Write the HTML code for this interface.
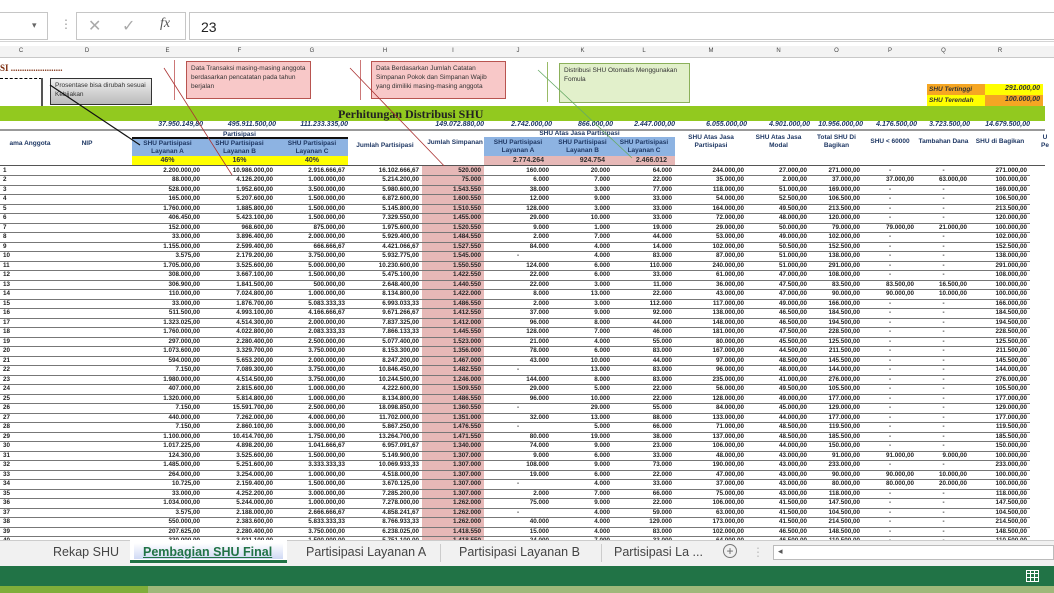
<!DOCTYPE html>
<html><head><meta charset="utf-8"><style>
*{margin:0;padding:0;box-sizing:border-box}
body{width:1054px;height:593px;overflow:hidden;background:#fff;font-family:"Liberation Sans",sans-serif;position:relative}
.abs{position:absolute}
.fbar{left:0;top:0;width:1054px;height:42px;background:#fff;border-bottom:1px solid #d4d4d4}
.box{border:1px solid #c6c6c6;background:#fff}
.colh{left:0;top:46px;width:1054px;height:12px;background:#f3f3f3;border-bottom:1px solid #c8c8c8;font-size:6px;color:#444}
.colh span{position:absolute;top:2px;text-align:center}
.note{font-size:6.5px;line-height:9px;color:#333;padding:2px 4px;border:1px solid #b85450}
table{border-collapse:collapse;table-layout:fixed;position:absolute;left:0;top:166px;font-size:6.3px;font-weight:bold;color:#222}
td{height:9.5px;padding:0 3px;text-align:right;border-bottom:1px solid #777;white-space:nowrap;overflow:hidden;line-height:8px}
td.l{text-align:left}
td.p{background:#e6b8b7}
td.c{text-align:center}
.hd{font-size:6.5px;font-weight:bold;color:#1f3864;text-align:center;position:absolute;line-height:8px}
.tot{position:absolute;top:121px;font-size:7px;font-style:italic;font-weight:bold;color:#1f3864;text-align:right}
.tab{position:absolute;top:545px;font-size:12.5px;color:#444}
</style></head><body>
<div class="abs fbar"></div>
<div class="abs box" style="left:-2px;top:12px;width:50px;height:28px"></div>
<div class="abs" style="left:32px;top:20px;font-size:9px;color:#666">▾</div>
<div class="abs" style="left:60px;top:17px;font-size:12px;color:#999">⋮</div>
<div class="abs box" style="left:76px;top:12px;width:110px;height:28px"></div>
<div class="abs" style="left:88px;top:16px;font-size:16px;color:#aaa">✕</div>
<div class="abs" style="left:122px;top:16px;font-size:16px;color:#aaa">✓</div>
<div class="abs" style="left:160px;top:16px;font-size:14px;color:#555;font-style:italic;font-family:'Liberation Serif',serif">fx</div>
<div class="abs box" style="left:189px;top:12px;width:870px;height:28px"></div>
<div class="abs" style="left:201px;top:19px;font-size:14px;color:#222">23</div>

<div class="abs colh">
<span style="left:0;width:42px">C</span><span style="left:42px;width:90px">D</span><span style="left:132px;width:71px">E</span><span style="left:203px;width:73px">F</span><span style="left:276px;width:72px">G</span><span style="left:348px;width:74px">H</span><span style="left:422px;width:62px">I</span><span style="left:484px;width:68px">J</span><span style="left:552px;width:61px">K</span><span style="left:613px;width:62px">L</span><span style="left:675px;width:72px">M</span><span style="left:747px;width:63px">N</span><span style="left:810px;width:53px">O</span><span style="left:863px;width:54px">P</span><span style="left:917px;width:53px">Q</span><span style="left:970px;width:60px">R</span>
</div>

<div class="abs" style="left:0;top:63px;font-size:9px;font-weight:bold;color:#7b2c0e;font-family:'Liberation Serif',serif">SI <span style="color:#7b2c0e;letter-spacing:0">.......................</span></div>
<div class="abs" style="left:0;top:78px;width:42px;border-top:1px dashed #000"></div>
<div class="abs" style="left:41px;top:78px;width:2px;height:28px;background:#555"></div>
<div class="abs note" style="left:50px;top:78px;width:102px;height:27px;background:linear-gradient(#eee,#bbb);border-color:#333">Prosentase bisa dirubah sesuai Kebijakan</div>
<div class="abs note" style="left:186px;top:61px;width:125px;height:38px;background:#f8c8c8">Data Transaksi masing-masing anggota berdasarkan pencatatan pada tahun berjalan</div>
<div class="abs note" style="left:371px;top:61px;width:135px;height:38px;background:#f8c8c8">Data Berdasarkan Jumlah Catatan Simpanan Pokok dan Simpanan Wajib yang dimiliki masing-masing anggota</div>
<div class="abs note" style="left:559px;top:63px;width:131px;height:40px;background:#e2f0cb;border-color:#8bb05a">Distribusi SHU Otomatis Menggunakan Fomula</div>
<div class="abs" style="left:174px;top:60px;width:1px;height:40px;background:#c77"></div>
<div class="abs" style="left:360px;top:60px;width:1px;height:40px;background:#c77"></div>
<div class="abs" style="left:547px;top:62px;width:1px;height:40px;background:#9b6"></div>

<div class="abs" style="left:927px;top:84px;width:58px;height:11px;background:#f5a623;font-size:6.5px;font-style:italic;font-weight:bold;color:#333;padding:2px">SHU Tertinggi</div>
<div class="abs" style="left:985px;top:84px;width:58px;height:11px;background:#ffff00;font-size:7px;font-style:italic;font-weight:bold;color:#333;text-align:right;padding:1px 3px">291.000,00</div>
<div class="abs" style="left:927px;top:95px;width:58px;height:11px;background:#ffff00;font-size:6.5px;font-style:italic;font-weight:bold;color:#333;padding:2px">SHU Terendah</div>
<div class="abs" style="left:985px;top:95px;width:58px;height:11px;background:#f5a623;font-size:7px;font-style:italic;font-weight:bold;color:#333;text-align:right;padding:1px 3px">100.000,00</div>

<div class="abs" style="left:0;top:106px;width:1045px;height:15px;background:#92c91f"></div>
<div class="abs" style="left:338px;top:107px;font-size:12px;font-weight:bold;color:#222;font-family:'Liberation Serif',serif">Perhitungan Distribusi SHU</div>

<div class="tot" style="left:132px;width:71px">37.950.149,80</div>
<div class="tot" style="left:203px;width:73px">495.911.500,00</div>
<div class="tot" style="left:276px;width:72px">111.233.335,00</div>
<div class="tot" style="left:422px;width:62px">149.072.880,00</div>
<div class="tot" style="left:484px;width:68px">2.742.000,00</div>
<div class="tot" style="left:552px;width:61px">866.000,00</div>
<div class="tot" style="left:613px;width:62px">2.447.000,00</div>
<div class="tot" style="left:675px;width:72px">6.055.000,00</div>
<div class="tot" style="left:747px;width:63px">4.901.000,00</div>
<div class="tot" style="left:810px;width:53px">10.956.000,00</div>
<div class="tot" style="left:863px;width:54px">4.176.500,00</div>
<div class="tot" style="left:917px;width:53px">3.723.500,00</div>
<div class="tot" style="left:970px;width:60px">14.679.500,00</div>
<div class="abs" style="left:0;top:129px;width:1045px;height:2px;background:#999"></div>

<div class="hd" style="left:203px;top:131px;width:73px">Partisipasi</div>
<div class="abs" style="left:132px;top:137px;width:216px;height:2px;background:#111"></div>
<div class="abs" style="left:132px;top:139px;width:216px;height:17px;background:#8db3e2"></div>
<div class="hd" style="left:132px;top:140px;width:71px">SHU Partisipasi<br>Layanan A</div>
<div class="hd" style="left:203px;top:140px;width:73px">SHU Partisipasi<br>Layanan B</div>
<div class="hd" style="left:276px;top:140px;width:72px">SHU Partisipasi<br>Layanan C</div>
<div class="abs" style="left:132px;top:156px;width:216px;height:9px;background:#ffff00"></div>
<div class="hd" style="left:132px;top:157px;width:71px;color:#333;font-size:7px">46%</div>
<div class="hd" style="left:203px;top:157px;width:73px;color:#333;font-size:7px">16%</div>
<div class="hd" style="left:276px;top:157px;width:72px;color:#333;font-size:7px">40%</div>
<div class="hd" style="left:0;top:140px;width:60px">ama Anggota</div>
<div class="hd" style="left:42px;top:140px;width:90px">NIP</div>
<div class="hd" style="left:348px;top:142px;width:74px">Jumlah Partisipasi</div>
<div class="hd" style="left:422px;top:139px;width:66px">Jumlah Simpanan</div>
<div class="hd" style="left:484px;top:130px;width:191px">SHU Atas Jasa Partisipasi</div>
<div class="abs" style="left:484px;top:137px;width:191px;height:19px;background:#8db3e2"></div>
<div class="hd" style="left:484px;top:139px;width:68px">SHU Partisipasi<br>Layanan A</div>
<div class="hd" style="left:552px;top:139px;width:61px">SHU Partisipasi<br>Layanan B</div>
<div class="hd" style="left:613px;top:139px;width:62px">SHU Partisipasi<br>Layanan C</div>
<div class="abs" style="left:484px;top:156px;width:191px;height:9px;background:#e6b8b7"></div>
<div class="abs" style="left:484px;top:157px;width:60px;font-size:7px;font-weight:bold;color:#333;text-align:right">2.774.264</div>
<div class="abs" style="left:552px;top:157px;width:53px;font-size:7px;font-weight:bold;color:#333;text-align:right">924.754</div>
<div class="abs" style="left:613px;top:157px;width:54px;font-size:7px;font-weight:bold;color:#333;text-align:right">2.466.012</div>
<div class="hd" style="left:675px;top:134px;width:72px">SHU Atas Jasa<br>Partisipasi</div>
<div class="hd" style="left:747px;top:134px;width:63px">SHU Atas Jasa<br>Modal</div>
<div class="hd" style="left:810px;top:134px;width:53px">Total SHU Di<br>Bagikan</div>
<div class="hd" style="left:863px;top:138px;width:54px">SHU &lt; 60000</div>
<div class="hd" style="left:917px;top:138px;width:53px">Tambahan Dana</div>
<div class="hd" style="left:970px;top:138px;width:60px">SHU di Bagikan</div>
<div class="hd" style="left:1030px;top:134px;width:30px">U<br>Pe</div>
<div class="abs" style="left:0;top:165px;width:1045px;height:1px;background:#555"></div>

<svg class="abs" style="left:0;top:0" width="1054" height="593">
<line x1="50" y1="85" x2="140" y2="145" stroke="#111" stroke-width="1.2"/>
<line x1="164" y1="68" x2="232" y2="175" stroke="#a33" stroke-width="0.8"/>
<line x1="350" y1="68" x2="450" y2="172" stroke="#a33" stroke-width="0.8"/>
<line x1="538" y1="70" x2="632" y2="158" stroke="#6a6" stroke-width="0.8"/>
</svg>

<table>
<colgroup><col style="width:42px"><col style="width:90px"><col style="width:71px"><col style="width:73px"><col style="width:72px"><col style="width:74px"><col style="width:62px"><col style="width:68px"><col style="width:61px"><col style="width:62px"><col style="width:72px"><col style="width:63px"><col style="width:53px"><col style="width:54px"><col style="width:53px"><col style="width:60px"></colgroup>
<tr><td class="l">1</td><td></td><td>2.200.000,00</td><td>10.986.000,00</td><td>2.916.666,67</td><td>16.102.666,67</td><td class="p">520.000</td><td>160.000</td><td>20.000</td><td>64.000</td><td>244.000,00</td><td>27.000,00</td><td>271.000,00</td><td class="c">-</td><td class="c">-</td><td>271.000,00</td></tr>
<tr><td class="l">2</td><td></td><td>88.000,00</td><td>4.126.200,00</td><td>1.000.000,00</td><td>5.214.200,00</td><td class="p">75.000</td><td>6.000</td><td>7.000</td><td>22.000</td><td>35.000,00</td><td>2.000,00</td><td>37.000,00</td><td>37.000,00</td><td>63.000,00</td><td>100.000,00</td></tr>
<tr><td class="l">3</td><td></td><td>528.000,00</td><td>1.952.600,00</td><td>3.500.000,00</td><td>5.980.600,00</td><td class="p">1.543.550</td><td>38.000</td><td>3.000</td><td>77.000</td><td>118.000,00</td><td>51.000,00</td><td>169.000,00</td><td class="c">-</td><td class="c">-</td><td>169.000,00</td></tr>
<tr><td class="l">4</td><td></td><td>165.000,00</td><td>5.207.600,00</td><td>1.500.000,00</td><td>6.872.600,00</td><td class="p">1.600.550</td><td>12.000</td><td>9.000</td><td>33.000</td><td>54.000,00</td><td>52.500,00</td><td>106.500,00</td><td class="c">-</td><td class="c">-</td><td>106.500,00</td></tr>
<tr><td class="l">5</td><td></td><td>1.760.000,00</td><td>1.885.800,00</td><td>1.500.000,00</td><td>5.145.800,00</td><td class="p">1.510.550</td><td>128.000</td><td>3.000</td><td>33.000</td><td>164.000,00</td><td>49.500,00</td><td>213.500,00</td><td class="c">-</td><td class="c">-</td><td>213.500,00</td></tr>
<tr><td class="l">6</td><td></td><td>406.450,00</td><td>5.423.100,00</td><td>1.500.000,00</td><td>7.329.550,00</td><td class="p">1.455.000</td><td>29.000</td><td>10.000</td><td>33.000</td><td>72.000,00</td><td>48.000,00</td><td>120.000,00</td><td class="c">-</td><td class="c">-</td><td>120.000,00</td></tr>
<tr><td class="l">7</td><td></td><td>152.000,00</td><td>968.600,00</td><td>875.000,00</td><td>1.975.600,00</td><td class="p">1.520.550</td><td>9.000</td><td>1.000</td><td>19.000</td><td>29.000,00</td><td>50.000,00</td><td>79.000,00</td><td>79.000,00</td><td>21.000,00</td><td>100.000,00</td></tr>
<tr><td class="l">8</td><td></td><td>33.000,00</td><td>3.896.400,00</td><td>2.000.000,00</td><td>5.929.400,00</td><td class="p">1.484.550</td><td>2.000</td><td>7.000</td><td>44.000</td><td>53.000,00</td><td>49.000,00</td><td>102.000,00</td><td class="c">-</td><td class="c">-</td><td>102.000,00</td></tr>
<tr><td class="l">9</td><td></td><td>1.155.000,00</td><td>2.599.400,00</td><td>666.666,67</td><td>4.421.066,67</td><td class="p">1.527.550</td><td>84.000</td><td>4.000</td><td>14.000</td><td>102.000,00</td><td>50.500,00</td><td>152.500,00</td><td class="c">-</td><td class="c">-</td><td>152.500,00</td></tr>
<tr><td class="l">10</td><td></td><td>3.575,00</td><td>2.179.200,00</td><td>3.750.000,00</td><td>5.932.775,00</td><td class="p">1.545.000</td><td class="c">-</td><td>4.000</td><td>83.000</td><td>87.000,00</td><td>51.000,00</td><td>138.000,00</td><td class="c">-</td><td class="c">-</td><td>138.000,00</td></tr>
<tr><td class="l">11</td><td></td><td>1.705.000,00</td><td>3.525.600,00</td><td>5.000.000,00</td><td>10.230.600,00</td><td class="p">1.550.550</td><td>124.000</td><td>6.000</td><td>110.000</td><td>240.000,00</td><td>51.000,00</td><td>291.000,00</td><td class="c">-</td><td class="c">-</td><td>291.000,00</td></tr>
<tr><td class="l">12</td><td></td><td>308.000,00</td><td>3.667.100,00</td><td>1.500.000,00</td><td>5.475.100,00</td><td class="p">1.422.550</td><td>22.000</td><td>6.000</td><td>33.000</td><td>61.000,00</td><td>47.000,00</td><td>108.000,00</td><td class="c">-</td><td class="c">-</td><td>108.000,00</td></tr>
<tr><td class="l">13</td><td></td><td>306.900,00</td><td>1.841.500,00</td><td>500.000,00</td><td>2.648.400,00</td><td class="p">1.440.550</td><td>22.000</td><td>3.000</td><td>11.000</td><td>36.000,00</td><td>47.500,00</td><td>83.500,00</td><td>83.500,00</td><td>16.500,00</td><td>100.000,00</td></tr>
<tr><td class="l">14</td><td></td><td>110.000,00</td><td>7.024.800,00</td><td>1.000.000,00</td><td>8.134.800,00</td><td class="p">1.422.000</td><td>8.000</td><td>13.000</td><td>22.000</td><td>43.000,00</td><td>47.000,00</td><td>90.000,00</td><td>90.000,00</td><td>10.000,00</td><td>100.000,00</td></tr>
<tr><td class="l">15</td><td></td><td>33.000,00</td><td>1.876.700,00</td><td>5.083.333,33</td><td>6.993.033,33</td><td class="p">1.486.550</td><td>2.000</td><td>3.000</td><td>112.000</td><td>117.000,00</td><td>49.000,00</td><td>166.000,00</td><td class="c">-</td><td class="c">-</td><td>166.000,00</td></tr>
<tr><td class="l">16</td><td></td><td>511.500,00</td><td>4.993.100,00</td><td>4.166.666,67</td><td>9.671.266,67</td><td class="p">1.412.550</td><td>37.000</td><td>9.000</td><td>92.000</td><td>138.000,00</td><td>46.500,00</td><td>184.500,00</td><td class="c">-</td><td class="c">-</td><td>184.500,00</td></tr>
<tr><td class="l">17</td><td></td><td>1.323.025,00</td><td>4.514.300,00</td><td>2.000.000,00</td><td>7.837.325,00</td><td class="p">1.412.000</td><td>96.000</td><td>8.000</td><td>44.000</td><td>148.000,00</td><td>46.500,00</td><td>194.500,00</td><td class="c">-</td><td class="c">-</td><td>194.500,00</td></tr>
<tr><td class="l">18</td><td></td><td>1.760.000,00</td><td>4.022.800,00</td><td>2.083.333,33</td><td>7.866.133,33</td><td class="p">1.445.550</td><td>128.000</td><td>7.000</td><td>46.000</td><td>181.000,00</td><td>47.500,00</td><td>228.500,00</td><td class="c">-</td><td class="c">-</td><td>228.500,00</td></tr>
<tr><td class="l">19</td><td></td><td>297.000,00</td><td>2.280.400,00</td><td>2.500.000,00</td><td>5.077.400,00</td><td class="p">1.523.000</td><td>21.000</td><td>4.000</td><td>55.000</td><td>80.000,00</td><td>45.500,00</td><td>125.500,00</td><td class="c">-</td><td class="c">-</td><td>125.500,00</td></tr>
<tr><td class="l">20</td><td></td><td>1.073.600,00</td><td>3.329.700,00</td><td>3.750.000,00</td><td>8.153.300,00</td><td class="p">1.356.000</td><td>78.000</td><td>6.000</td><td>83.000</td><td>167.000,00</td><td>44.500,00</td><td>211.500,00</td><td class="c">-</td><td class="c">-</td><td>211.500,00</td></tr>
<tr><td class="l">21</td><td></td><td>594.000,00</td><td>5.653.200,00</td><td>2.000.000,00</td><td>8.247.200,00</td><td class="p">1.467.000</td><td>43.000</td><td>10.000</td><td>44.000</td><td>97.000,00</td><td>48.500,00</td><td>145.500,00</td><td class="c">-</td><td class="c">-</td><td>145.500,00</td></tr>
<tr><td class="l">22</td><td></td><td>7.150,00</td><td>7.089.300,00</td><td>3.750.000,00</td><td>10.846.450,00</td><td class="p">1.482.550</td><td class="c">-</td><td>13.000</td><td>83.000</td><td>96.000,00</td><td>48.000,00</td><td>144.000,00</td><td class="c">-</td><td class="c">-</td><td>144.000,00</td></tr>
<tr><td class="l">23</td><td></td><td>1.980.000,00</td><td>4.514.500,00</td><td>3.750.000,00</td><td>10.244.500,00</td><td class="p">1.246.000</td><td>144.000</td><td>8.000</td><td>83.000</td><td>235.000,00</td><td>41.000,00</td><td>276.000,00</td><td class="c">-</td><td class="c">-</td><td>276.000,00</td></tr>
<tr><td class="l">24</td><td></td><td>407.000,00</td><td>2.815.600,00</td><td>1.000.000,00</td><td>4.222.600,00</td><td class="p">1.509.550</td><td>29.000</td><td>5.000</td><td>22.000</td><td>56.000,00</td><td>49.500,00</td><td>105.500,00</td><td class="c">-</td><td class="c">-</td><td>105.500,00</td></tr>
<tr><td class="l">25</td><td></td><td>1.320.000,00</td><td>5.814.800,00</td><td>1.000.000,00</td><td>8.134.800,00</td><td class="p">1.486.550</td><td>96.000</td><td>10.000</td><td>22.000</td><td>128.000,00</td><td>49.000,00</td><td>177.000,00</td><td class="c">-</td><td class="c">-</td><td>177.000,00</td></tr>
<tr><td class="l">26</td><td></td><td>7.150,00</td><td>15.591.700,00</td><td>2.500.000,00</td><td>18.098.850,00</td><td class="p">1.360.550</td><td class="c">-</td><td>29.000</td><td>55.000</td><td>84.000,00</td><td>45.000,00</td><td>129.000,00</td><td class="c">-</td><td class="c">-</td><td>129.000,00</td></tr>
<tr><td class="l">27</td><td></td><td>440.000,00</td><td>7.262.000,00</td><td>4.000.000,00</td><td>11.702.000,00</td><td class="p">1.351.000</td><td>32.000</td><td>13.000</td><td>88.000</td><td>133.000,00</td><td>44.000,00</td><td>177.000,00</td><td class="c">-</td><td class="c">-</td><td>177.000,00</td></tr>
<tr><td class="l">28</td><td></td><td>7.150,00</td><td>2.860.100,00</td><td>3.000.000,00</td><td>5.867.250,00</td><td class="p">1.476.550</td><td class="c">-</td><td>5.000</td><td>66.000</td><td>71.000,00</td><td>48.500,00</td><td>119.500,00</td><td class="c">-</td><td class="c">-</td><td>119.500,00</td></tr>
<tr><td class="l">29</td><td></td><td>1.100.000,00</td><td>10.414.700,00</td><td>1.750.000,00</td><td>13.264.700,00</td><td class="p">1.471.550</td><td>80.000</td><td>19.000</td><td>38.000</td><td>137.000,00</td><td>48.500,00</td><td>185.500,00</td><td class="c">-</td><td class="c">-</td><td>185.500,00</td></tr>
<tr><td class="l">30</td><td></td><td>1.017.225,00</td><td>4.898.200,00</td><td>1.041.666,67</td><td>6.957.091,67</td><td class="p">1.340.000</td><td>74.000</td><td>9.000</td><td>23.000</td><td>106.000,00</td><td>44.000,00</td><td>150.000,00</td><td class="c">-</td><td class="c">-</td><td>150.000,00</td></tr>
<tr><td class="l">31</td><td></td><td>124.300,00</td><td>3.525.600,00</td><td>1.500.000,00</td><td>5.149.900,00</td><td class="p">1.307.000</td><td>9.000</td><td>6.000</td><td>33.000</td><td>48.000,00</td><td>43.000,00</td><td>91.000,00</td><td>91.000,00</td><td>9.000,00</td><td>100.000,00</td></tr>
<tr><td class="l">32</td><td></td><td>1.485.000,00</td><td>5.251.600,00</td><td>3.333.333,33</td><td>10.069.933,33</td><td class="p">1.307.000</td><td>108.000</td><td>9.000</td><td>73.000</td><td>190.000,00</td><td>43.000,00</td><td>233.000,00</td><td class="c">-</td><td class="c">-</td><td>233.000,00</td></tr>
<tr><td class="l">33</td><td></td><td>264.000,00</td><td>3.254.000,00</td><td>1.000.000,00</td><td>4.518.000,00</td><td class="p">1.307.000</td><td>19.000</td><td>6.000</td><td>22.000</td><td>47.000,00</td><td>43.000,00</td><td>90.000,00</td><td>90.000,00</td><td>10.000,00</td><td>100.000,00</td></tr>
<tr><td class="l">34</td><td></td><td>10.725,00</td><td>2.159.400,00</td><td>1.500.000,00</td><td>3.670.125,00</td><td class="p">1.307.000</td><td class="c">-</td><td>4.000</td><td>33.000</td><td>37.000,00</td><td>43.000,00</td><td>80.000,00</td><td>80.000,00</td><td>20.000,00</td><td>100.000,00</td></tr>
<tr><td class="l">35</td><td></td><td>33.000,00</td><td>4.252.200,00</td><td>3.000.000,00</td><td>7.285.200,00</td><td class="p">1.307.000</td><td>2.000</td><td>7.000</td><td>66.000</td><td>75.000,00</td><td>43.000,00</td><td>118.000,00</td><td class="c">-</td><td class="c">-</td><td>118.000,00</td></tr>
<tr><td class="l">36</td><td></td><td>1.034.000,00</td><td>5.244.000,00</td><td>1.000.000,00</td><td>7.278.000,00</td><td class="p">1.262.000</td><td>75.000</td><td>9.000</td><td>22.000</td><td>106.000,00</td><td>41.500,00</td><td>147.500,00</td><td class="c">-</td><td class="c">-</td><td>147.500,00</td></tr>
<tr><td class="l">37</td><td></td><td>3.575,00</td><td>2.188.000,00</td><td>2.666.666,67</td><td>4.858.241,67</td><td class="p">1.262.000</td><td class="c">-</td><td>4.000</td><td>59.000</td><td>63.000,00</td><td>41.500,00</td><td>104.500,00</td><td class="c">-</td><td class="c">-</td><td>104.500,00</td></tr>
<tr><td class="l">38</td><td></td><td>550.000,00</td><td>2.383.600,00</td><td>5.833.333,33</td><td>8.766.933,33</td><td class="p">1.262.000</td><td>40.000</td><td>4.000</td><td>129.000</td><td>173.000,00</td><td>41.500,00</td><td>214.500,00</td><td class="c">-</td><td class="c">-</td><td>214.500,00</td></tr>
<tr><td class="l">39</td><td></td><td>207.625,00</td><td>2.280.400,00</td><td>3.750.000,00</td><td>6.238.025,00</td><td class="p">1.418.550</td><td>15.000</td><td>4.000</td><td>83.000</td><td>102.000,00</td><td>46.500,00</td><td>148.500,00</td><td class="c">-</td><td class="c">-</td><td>148.500,00</td></tr>
<tr><td class="l">40</td><td></td><td>330.000,00</td><td>3.921.100,00</td><td>1.500.000,00</td><td>5.751.100,00</td><td class="p">1.418.550</td><td>24.000</td><td>7.000</td><td>33.000</td><td>64.000,00</td><td>46.500,00</td><td>110.500,00</td><td class="c">-</td><td class="c">-</td><td>110.500,00</td></tr>
</table>

<div class="abs" style="left:0;top:540px;width:1054px;height:26px;background:#f1f1f1;border-top:1px solid #ccc"></div>
<div class="abs" style="left:130px;top:540px;width:157px;height:23px;background:#fff;border-bottom:3px solid #217346"></div>
<div class="abs" style="left:134px;top:543px;width:149px;height:16px;background:linear-gradient(#fff,#cfd9f5)"></div>
<div class="tab" style="left:53px">Rekap SHU</div>
<div class="tab" style="left:143px;color:#217346;font-weight:bold;text-decoration:underline">Pembagian SHU Final</div>
<div class="tab" style="left:306px">Partisipasi Layanan A</div>
<div class="tab" style="left:459px">Partisipasi Layanan B</div>
<div class="tab" style="left:614px">Partisipasi La ...</div>
<div class="abs" style="left:440px;top:544px;width:1px;height:18px;background:#ccc"></div>
<div class="abs" style="left:601px;top:544px;width:1px;height:18px;background:#ccc"></div>
<div class="abs" style="left:723px;top:544px;width:14px;height:14px;border:1px solid #777;border-radius:50%;font-size:12px;line-height:12px;text-align:center;color:#666">+</div>
<div class="abs" style="left:752px;top:545px;font-size:12px;color:#bbb">⋮</div>
<div class="abs" style="left:773px;top:545px;width:281px;height:15px;border:1px solid #bbb;background:#fff;font-size:9px;color:#555;padding-left:4px">◂</div>
<div class="abs" style="left:0;top:566px;width:1054px;height:20px;background:#217346"></div>
<div class="abs" style="left:1026px;top:570px;width:13px;height:12px;border:1px solid #fff;background:repeating-linear-gradient(90deg,transparent 0 3px,#fff 3px 4px),repeating-linear-gradient(0deg,transparent 0 3px,#fff 3px 4px)"></div>
<div class="abs" style="left:0;top:586px;width:1054px;height:7px;background:#9fb87a"></div>
<div class="abs" style="left:0;top:586px;width:148px;height:7px;background:#7fae3a"></div>
</body></html>
